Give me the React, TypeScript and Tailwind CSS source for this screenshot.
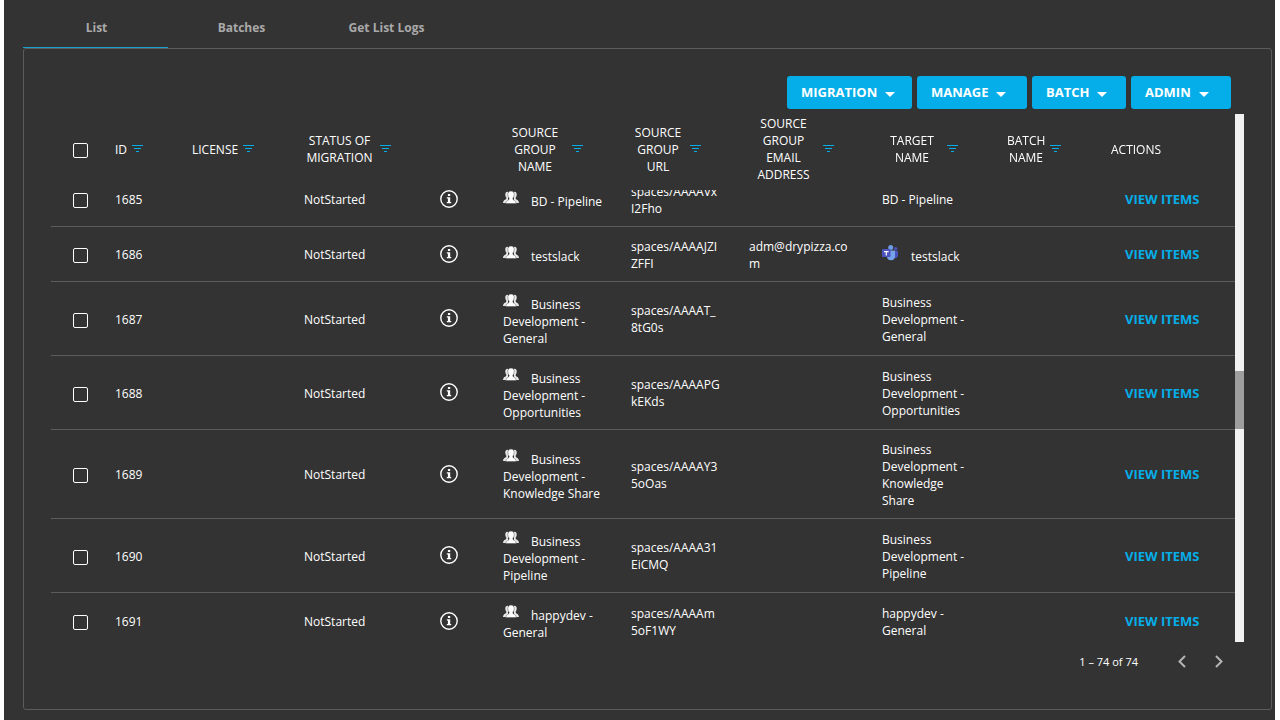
import { useLayoutEffect, useRef } from 'react';

type Row = {
  id: number;
  name: string;
  url: string;
  email?: string;
  target: string;
  teams?: boolean;
  height: string;
};

const rows: Row[] = [
  { id: 1685, name: 'BD - Pipeline', url: 'spaces/AAAAVx\nI2Fho', target: 'BD - Pipeline', height: 'h-[55px]' },
  { id: 1686, name: 'testslack', url: 'spaces/AAAAJZI\nZFFI', email: 'adm@drypizza.co\nm', target: 'testslack', teams: true, height: 'h-[55px]' },
  { id: 1687, name: 'Business\nDevelopment -\nGeneral', url: 'spaces/AAAAT_\n8tG0s', target: 'Business\nDevelopment -\nGeneral', height: 'h-[74px]' },
  { id: 1688, name: 'Business\nDevelopment -\nOpportunities', url: 'spaces/AAAAPG\nkEKds', target: 'Business\nDevelopment -\nOpportunities', height: 'h-[74px]' },
  { id: 1689, name: 'Business\nDevelopment -\nKnowledge Share', url: 'spaces/AAAAY3\n5oOas', target: 'Business\nDevelopment -\nKnowledge\nShare', height: 'h-[89px]' },
  { id: 1690, name: 'Business\nDevelopment -\nPipeline', url: 'spaces/AAAA31\nEiCMQ', target: 'Business\nDevelopment -\nPipeline', height: 'h-[74px]' },
  { id: 1691, name: 'happydev -\nGeneral', url: 'spaces/AAAAm\n5oF1WY', target: 'happydev -\nGeneral', height: 'h-[57px]' },
];

const columns = [
  { label: 'ID', col: 'w-[77px]', box: '' },
  { label: 'LICENSE', col: 'w-[112px]', box: '' },
  { label: 'STATUS OF MIGRATION', col: 'w-[136px]', box: 'w-[71px]' },
  { label: '', col: 'w-[63px]', box: '' },
  { label: 'SOURCE GROUP NAME', col: 'w-[128px]', box: 'w-[64px]' },
  { label: 'SOURCE GROUP URL', col: 'w-[118px]', box: 'w-[54px]' },
  { label: 'SOURCE GROUP EMAIL ADDRESS', col: 'w-[133px]', box: 'w-[69px]' },
  { label: 'TARGET NAME', col: 'w-[125px]', box: 'w-[60px]' },
  { label: 'BATCH NAME', col: 'w-[104px]', box: 'w-[38px]' },
];

const menus = [
  { label: 'MIGRATION', width: 'w-[125px]' },
  { label: 'MANAGE', width: 'w-[110px]' },
  { label: 'BATCH', width: 'w-[94px]' },
  { label: 'ADMIN', width: 'w-[100px]' },
];

const tabs = ['List', 'Batches', 'Get List Logs'];

function FilterIcon() {
  return (
    <svg width="11" height="8" viewBox="0 0 11 8" fill="#05aee8" className="block" aria-hidden="true">
      <rect x="0" y="0" width="11" height="1" />
      <rect x="2" y="3" width="7" height="1" />
      <rect x="4" y="6" width="3" height="1" />
    </svg>
  );
}

function InfoIcon() {
  return (
    <svg width="18" height="18" viewBox="0 0 18 18" className="block" aria-hidden="true">
      <circle cx="9" cy="9" r="8.2" fill="none" stroke="#fff" strokeWidth="1.4" />
      <path d="M7.9 4h2.300v2H7.900zM6.800 7.300h3.400v4.800h1v1.200H6.800v-1.200h1.100V8.500H6.800z" fill="#fff" />
    </svg>
  );
}

function PeopleIcon() {
  return (
    <svg width="16" height="16" viewBox="0 -2 16 16" className="mr-3 inline-block align-[1px]" aria-hidden="true">
      <g fill="#e8e8e8">
        <path d="M4.500.700C2.800.700 2.100 2.100 2.300 4c.1 1.300.5 2 1 2.500v1.300C2.800 8.800.1 9 0 12h5V1z" />
        <path d="M11.500.700c1.700 0 2.400 1.400 2.200 3.300-.1 1.300-.5 2-1 2.500v1.300c.5 1 3.200 1.200 3.300 4.200h-5V1z" />
      </g>
      <path
        d="M8 .1C5.700.1 4.600 1.700 4.800 3.900c.1 1.500.6 2.600 1.300 3.200v1.200C5.600 9.400 2.900 9.500 2.700 12.500h10.600c-.2-3-2.900-3.100-3.400-4.200V7.100c.7-.6 1.200-1.700 1.300-3.200C11.400 1.700 10.300.1 8 .1z"
        fill="#fff"
        stroke="#555"
        strokeWidth=".5"
      />
    </svg>
  );
}

function TeamsIcon() {
  return (
    <svg width="16" height="16" viewBox="0 0 16 16" className="mr-[13px] inline-block align-[0px]" aria-hidden="true">
      <circle cx="13.700" cy="3.700" r="1.700" fill="#4a52bd" />
      <path d="M11 6h5v4.500a2.600 2.600 0 0 1-4 2.200z" fill="#4a52bd" />
      <circle cx="8.700" cy="2.600" r="2.500" fill="#6f9be6" />
      <path d="M5 5.600h8v5.600a4 4 0 0 1-8 0z" fill="#76a3ea" />
      <rect x="0" y="4" width="8.500" height="8" rx=".8" fill="#4b53bc" />
      <path d="M2 6h4.600v1.200H4.900v3.300H3.700V7.200H2z" fill="#fff" />
    </svg>
  );
}

function Check({ label }: { label: string }) {
  return (
    <input
      type="checkbox"
      aria-label={label}
      className="block size-[15px] appearance-none rounded-[2px] border border-white checked:bg-[#05aee8]"
    />
  );
}

export default function App() {
  const viewport = useRef<HTMLDivElement>(null);
  useLayoutEffect(() => {
    if (viewport.current) viewport.current.scrollTop = 18;
  }, []);

  return (
    <div className="min-h-screen bg-white pr-[5px] pl-1 font-['Open_Sans','Noto_Sans',sans-serif] text-[12px] leading-[17px] text-white">
      <main className="min-h-screen bg-[#333] pt-2 pr-[3px] pb-2.5 pl-[19px]">
        <nav className="flex" role="tablist">
          {tabs.map((tab, i) => (
            <button
              key={tab}
              role="tab"
              aria-selected={i === 0}
              className={
                i === 0
                  ? 'h-10 w-[145px] border-b border-[#1b9fd0] pl-0.5 font-bold text-[#a9a9a9]'
                  : 'h-10 w-[145px] border-b border-transparent pl-0.5 font-bold text-[#a9a9a9]'
              }
            >
              {tab}
            </button>
          ))}
        </nav>
        <section className="rounded-[3px] border border-[#5c5c5c] pt-[27px] pr-[27px] pb-[29px] pl-[27px]">
          <div className="flex justify-end gap-[5px] pr-[13px]">
            {menus.map((m) => (
              <button
                key={m.label}
                className={`${m.width} flex h-[33px] items-center gap-2 rounded-[3px] bg-[#05aee8] pl-3.5 text-[13px] font-bold`}
              >
                {m.label}
                <svg width="10" height="5" viewBox="0 0 10 5" className="mt-1" aria-hidden="true">
                  <path d="M0 0h10L5 5z" fill="#fff" />
                </svg>
              </button>
            ))}
          </div>
          <div className="mt-[5px] flex h-[528px]">
            <div ref={viewport} className="h-full flex-1 overflow-y-auto [scrollbar-width:none]">
              <table className="w-full table-fixed border-separate border-spacing-0">
                <colgroup>
                  <col className="w-[52px]" />
                  {columns.map((c, i) => (
                    <col key={i} className={c.col} />
                  ))}
                  <col className="w-[136px]" />
                </colgroup>
                <thead className="sticky top-0 z-10 bg-[#333]">
                  <tr className="h-[76px]">
                    <th className="pt-0 pb-1 pl-[22px]">
                      <Check label="Select all" />
                    </th>
                    {columns.map((c, i) => (
                      <th key={i} className="pb-1.5 pl-3 font-normal">
                        {c.label && (
                          <div className="flex items-center gap-[5px]">
                            <span className={c.box}>{c.label}</span>
                            <button aria-label={`Filter ${c.label}`} className="shrink-0">
                              <FilterIcon />
                            </button>
                          </div>
                        )}
                      </th>
                    ))}
                    <th className="pb-1.5 pl-3 text-left font-normal">ACTIONS</th>
                  </tr>
                </thead>
                <tbody className="whitespace-pre-line [&_td]:border-b [&_td]:border-[#5c5c5c] [&_td]:p-0 [&_td]:pt-px [&_td]:pl-3">
                  {rows.map((r) => (
                    <tr key={r.id} className={r.height}>
                      <td>
                        <div className="pt-0.5 pl-2.5">
                          <Check label={`Select ${r.id}`} />
                        </div>
                      </td>
                      <td>{r.id}</td>
                      <td></td>
                      <td>NotStarted</td>
                      <td>
                        <button aria-label={`Details of ${r.id}`} className="mb-0.5 block">
                          <InfoIcon />
                        </button>
                      </td>
                      <td>
                        <PeopleIcon />
                        {r.name}
                      </td>
                      <td>{r.url}</td>
                      <td>{r.email}</td>
                      <td>
                        {r.teams && <TeamsIcon />}
                        {r.target}
                      </td>
                      <td></td>
                      <td>
                        <a href="#items" className="block pl-3.5 text-[13px] font-bold text-[#05aee8]">
                          VIEW ITEMS
                        </a>
                      </td>
                    </tr>
                  ))}
                </tbody>
              </table>
            </div>
            <div className="w-[9px] bg-[#f1f1f1] pt-[257px]">
              <div className="h-[58px] bg-[#9e9e9e]" />
            </div>
          </div>
          <div className="flex h-[38px] items-center justify-end pr-[21px] text-[11px]">
            <span>1 – 74 of 74</span>
            <button aria-label="Previous page" className="ml-10">
              <svg width="8" height="13" viewBox="0 0 8 13" fill="none" stroke="#b5b5b5" strokeWidth="2" className="block">
                <path d="M7 1 1.500 6.500 7 12" />
              </svg>
            </button>
            <button aria-label="Next page" className="ml-[29px]">
              <svg width="8" height="13" viewBox="0 0 8 13" fill="none" stroke="#b5b5b5" strokeWidth="2" className="block">
                <path d="m1 1 5.500 5.500L1 12" />
              </svg>
            </button>
          </div>
        </section>
      </main>
    </div>
  );
}
